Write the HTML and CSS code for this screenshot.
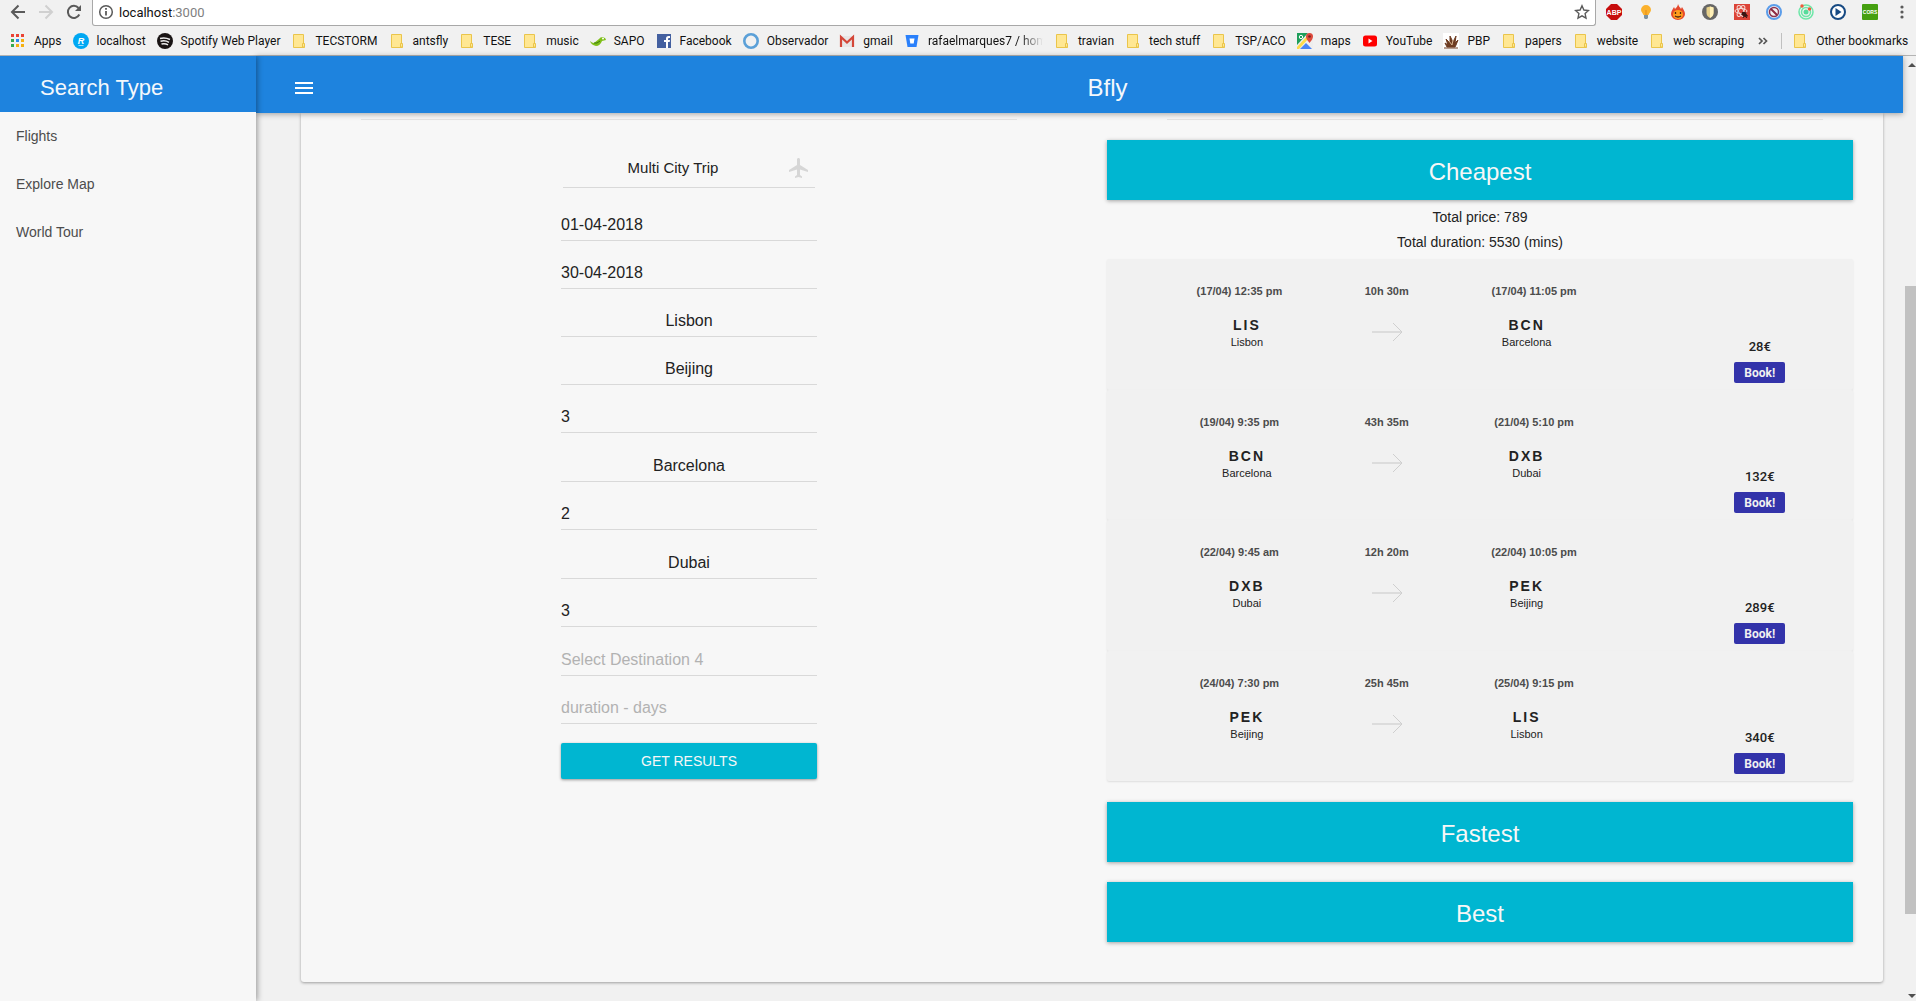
FILE: index.html
```html
<!DOCTYPE html>
<html lang="en">
<head>
<meta charset="utf-8">
<title>Bfly</title>
<link rel="stylesheet" href="styles.css">
</head>
<body>
<svg class="defs" aria-hidden="true">
  <symbol id="folder" viewBox="0 0 16 16"><path d="M2.5 1.500h10v10h1v3h-11z" fill="#ffe793" stroke="#eac54b"/><path d="M11.500 14v-3.500h2V14z" fill="#ffe793" stroke="#eac54b"/></symbol>
  <symbol id="arrow" viewBox="0 0 32 20"><path d="M1 10h30" stroke="#dcdcdc" stroke-width="2"/><path d="M22 1l9 9-9 9" fill="none" stroke="#cfcfcf"/></symbol>
</svg>

<header class="browser">
  <div class="toolbar">
    <button class="tool" aria-label="Back"><svg viewBox="0 0 16 16"><path d="M15 8H2M8.500 1.500L2 8l6.500 6.500" fill="none" stroke="#5a5a5a" stroke-width="2"/></svg></button>
    <button class="tool" aria-label="Forward"><svg viewBox="0 0 16 16"><path d="M1 8h13M7.500 1.500L14 8l-6.500 6.500" fill="none" stroke="#d0d0d0" stroke-width="2"/></svg></button>
    <button class="tool" aria-label="Reload"><svg viewBox="0 0 16 16"><path d="M13.300 10.500A6 6 0 1 1 12.500 4" fill="none" stroke="#5a5a5a" stroke-width="2"/><path d="M15 1v6H9z" fill="#5a5a5a"/></svg></button>
    <div class="omnibox">
      <svg viewBox="0 0 16 16"><circle cx="8" cy="8" r="6.300" fill="none" stroke="#5a5a5a" stroke-width="1.500"/><path d="M8 7v4.500M8 4v1.800" stroke="#5a5a5a" stroke-width="1.800"/></svg>
      <span class="url">localhost<span class="port">:3000</span></span>
      <svg viewBox="0 0 16 16"><path d="M8 1.800l1.900 4.200 4.600.500-3.400 3.100.9 4.500L8 11.800l-4 2.300.9-4.500L1.500 6.500 6.100 6z" fill="none" stroke="#5a5a5a" stroke-width="1.400"/></svg>
    </div>
    <div class="extensions">
      <svg viewBox="0 0 16 16"><path d="M5 0h6l5 5v6l-5 5H5l-5-5V5z" fill="#c70d0d"/><text x="8" y="11" text-anchor="middle" class="abp">ABP</text></svg>
      <svg viewBox="0 0 16 16"><path d="M8 1a5 5 0 0 1 5 5c0 2-2 3-2.500 5h-5C5 9 3 8 3 6a5 5 0 0 1 5-5z" fill="#fbb12d"/><path d="M8 6v5" stroke="#e58b13"/><path d="M6 11h4v3l-1 1H7l-1-1z" fill="#7d92a0"/></svg>
      <svg viewBox="0 0 16 16"><path d="M8 0c1 3 2 3 3 5l1-2c1 2 3 4 3 7a7 6 0 0 1-14 0c0-3 2-5 3-7l1 2c1-1 3-3 3-5z" fill="#e5482d"/><ellipse cx="8" cy="10.500" rx="5" ry="4.500" fill="#ff9d1e"/><path d="M5.500 8v2M10.500 8v2M5 12q3 2 6 0" fill="none" stroke="#4c2410" stroke-width="1.300"/></svg>
      <svg viewBox="0 0 16 16"><circle cx="8" cy="8" r="8" fill="#666"/><path d="M4.500 3.500L8 2.500l3.500 1V9c0 2-1.500 4-3.500 5-2-1-3.500-3-3.500-5z" fill="#e7d18b"/><path d="M8 2.500l3.500 1V9c0 2-1.500 4-3.500 5z" fill="#fff0b8"/></svg>
      <svg viewBox="0 0 16 16"><path d="M0 0h16v16H0z" fill="#dc4337"/><g fill="none" stroke="#f6d9d5"><ellipse cx="7" cy="7" rx="6" ry="2.500"/><ellipse cx="7" cy="7" rx="6" ry="2.500" transform="rotate(60 7 7)"/><ellipse cx="7" cy="7" rx="6" ry="2.500" transform="rotate(120 7 7)"/></g><ellipse cx="10.500" cy="10.500" rx="2" ry="3" transform="rotate(-40 10.500 10.500)" fill="#3a1512"/><path d="M7 10l7 2M9 14l3-6M8 8l5 6" stroke="#3a1512"/></svg>
      <svg viewBox="0 0 16 16"><circle cx="8" cy="8" r="7" fill="#f5f3f3" stroke="#5b9dea" stroke-width="2"/><circle cx="8" cy="8" r="4.500" fill="none" stroke="#8c3552" stroke-width="1.500"/><path d="M5 5l6 6" stroke="#8c2840" stroke-width="2"/></svg>
      <svg viewBox="0 0 16 16"><g fill="none" stroke="#6ee7a8" stroke-width="1.500"><circle cx="8" cy="8" r="7"/><circle cx="8" cy="8" r="4.500"/></g><circle cx="8" cy="8" r="2.500" fill="#57dc9b"/><circle cx="4" cy="2" r="1.700" fill="#f05a3c"/><circle cx="11.500" cy="5" r="1.700" fill="#f05a3c"/></svg>
      <svg viewBox="0 0 16 16"><circle cx="8" cy="8" r="7" fill="#fff" stroke="#174a83" stroke-width="2"/><path d="M5.500 4l6 4-6 4z" fill="#174a83"/></svg>
      <svg viewBox="0 0 16 16"><rect width="16" height="16" rx="1" fill="#45a010"/><text x="8" y="10" text-anchor="middle" class="cors">CORS</text></svg>
      <svg viewBox="0 0 16 16"><g fill="#5a5a5a"><circle cx="8" cy="3" r="1.600"/><circle cx="8" cy="8" r="1.600"/><circle cx="8" cy="13" r="1.600"/></g></svg>
    </div>
  </div>
  <nav class="bookmarks" aria-label="Bookmarks">
    <a href="#"><svg viewBox="0 0 16 16"><path d="M1 1h3v3H1zM6 1h3v3H6zM11 1h3v3h-3z" fill="#ea4335"/><path d="M1 6h3v3H1zM1 11h3v3H1z" fill="#34a853"/><path d="M6 6h3v3H6z" fill="#2a8cf0"/><path d="M11 6h3v3h-3zM6 11h3v3H6zM11 11h3v3h-3z" fill="#f5b010"/></svg>Apps</a>
    <a href="#"><svg viewBox="0 0 16 16"><circle cx="8" cy="8" r="8" fill="#00a8f3"/><text x="8" y="11" text-anchor="middle" class="glyph">R</text><path d="M5.500 12.500h5" stroke="#9adffc"/></svg>localhost</a>
    <a href="#"><svg viewBox="0 0 16 16"><circle cx="8" cy="8" r="8" fill="#191414"/><path d="M3 5.500q5-1.500 10 1M3.500 8.300q4.500-1.300 8.500 1M4.500 11q3.500-1 6.500.8" fill="none" stroke="#eee" stroke-width="1.500"/></svg>Spotify Web Player</a>
    <a href="#"><svg><use href="#folder"/></svg>TECSTORM</a>
    <a href="#"><svg><use href="#folder"/></svg>antsfly</a>
    <a href="#"><svg><use href="#folder"/></svg>TESE</a>
    <a href="#"><svg><use href="#folder"/></svg>music</a>
    <a href="#"><svg viewBox="0 0 16 16"><path d="M0 8q2 2 4 2l5-4q1-2 4-2 3 1 3 3l-4 1q-2 5-6 5Q1 12 0 8z" fill="#7fbf1a"/><path d="M4 10q3 1 6-2" fill="none" stroke="#3d7a0c"/><circle cx="13" cy="5.500" r="1" fill="#fff"/></svg>SAPO</a>
    <a href="#"><svg viewBox="0 0 16 16"><path d="M1 1h14v14H1z" fill="#4460a0"/><path d="M10 15V9H8V7h2V5.500Q10 3 12.500 3H14v2h-1q-1 0-1 1v1h2l-.3 2H12v6z" fill="#fff"/></svg>Facebook</a>
    <a href="#"><svg viewBox="0 0 16 16"><circle cx="8" cy="8" r="6.700" fill="none" stroke="#5ba0d8" stroke-width="2.600"/></svg>Observador</a>
    <a href="#"><svg viewBox="0 0 16 16"><path d="M1 3h14v11H1z" fill="#e8e6e6"/><path d="M2 14V4l6 5.500L14 4v10" fill="none" stroke="#d44638" stroke-width="2.200"/></svg>gmail</a>
    <a href="#" class="cut"><svg viewBox="0 0 16 16"><path d="M1.500 2h13l-2 12h-9z" fill="#2a80fb"/><path d="M5.500 5.500h5l-.8 5H6.300z" fill="#fff"/></svg><span>rafaelmarques7 / hom</span></a>
    <a href="#"><svg><use href="#folder"/></svg>travian</a>
    <a href="#"><svg><use href="#folder"/></svg>tech stuff</a>
    <a href="#"><svg><use href="#folder"/></svg>TSP/ACO</a>
    <a href="#"><svg viewBox="0 0 16 16"><path d="M0 0h16v16H0z" fill="#eee"/><path d="M0 0h11L0 12z" fill="#1e9e5a"/><path d="M0 14L11 2l2 2L2 16H0z" fill="#fddb4a"/><path d="M3 16l6-6 6 6z" fill="#4a86f5"/><circle cx="4" cy="4" r="1.700" fill="none" stroke="#fff"/><path d="M12.500 10Q9 6 9 3.500a3.500 3.500 0 0 1 7 0Q16 6 12.500 10z" fill="#dd4b3e"/><circle cx="12.500" cy="3.500" r="1.300" fill="#7b231e"/></svg>maps</a>
    <a href="#"><svg viewBox="0 0 16 16"><rect x="1" y="2.500" width="14" height="11" rx="2.500" fill="#f00"/><path d="M6.500 5.500l4 2.500-4 2.500z" fill="#fff"/></svg>YouTube</a>
    <a href="#"><svg viewBox="0 0 16 16"><path d="M0 0h16v16H0z" fill="#fff"/><path d="M1 15h14M4 14l-2-4 3 2-2-6 4 4 0-7 3 6 3-6-1 7 3-3-2 5-1 2z" fill="#6e3d23" stroke="#6e3d23"/><path d="M6 8l3 4M10 7l-1 5" stroke="#d9b692"/></svg>PBP</a>
    <a href="#"><svg><use href="#folder"/></svg>papers</a>
    <a href="#"><svg><use href="#folder"/></svg>website</a>
    <a href="#"><svg><use href="#folder"/></svg>web scraping</a>
    <button class="more" aria-label="More bookmarks"><svg viewBox="0 0 16 16"><path d="M4 5l3 3-3 3M8.500 5l3 3-3 3" fill="none" stroke="#555" stroke-width="1.700"/></svg></button>
    <a href="#" class="other"><svg><use href="#folder"/></svg>Other bookmarks</a>
  </nav>
</header>

<div class="viewport">
  <aside class="sidebar">
    <h2>Search Type</h2>
    <nav>
      <a href="#">Flights</a>
      <a href="#">Explore Map</a>
      <a href="#">World Tour</a>
    </nav>
  </aside>
  <div class="page">
    <header class="appbar">
      <button class="menu" aria-label="Menu"><svg viewBox="0 0 24 24"><path d="M3 18h18v-2H3v2zm0-5h18v-2H3v2zm0-7v2h18V6H3z" fill="#fff"/></svg></button>
      <h1>Bfly</h1>
    </header>
    <main>
      <section class="panel">
        <div class="search">
          <hr>
          <form>
            <div class="trip">
              <select aria-label="Trip type"><option>Multi City Trip</option></select>
              <svg viewBox="0 0 24 24"><path d="M21 16v-2l-8-5V3.500c0-.83-.67-1.500-1.500-1.500S10 2.670 10 3.500V9l-8 5v2l8-2.500V19l-2 1.500V22l3.500-1 3.500 1v-1.500L13 19v-5.500l8 2.500z" fill="#d6d6d6"/></svg>
            </div>
            <input type="text" aria-label="Start date" value="01-04-2018">
            <input type="text" aria-label="End date" value="30-04-2018">
            <input type="text" class="city" aria-label="From" value="Lisbon">
            <input type="text" class="city" aria-label="Destination 1" value="Beijing">
            <input type="text" aria-label="Days at destination 1" value="3">
            <input type="text" class="city stop" aria-label="Destination 2" value="Barcelona">
            <input type="text" aria-label="Days at destination 2" value="2">
            <input type="text" class="city stop" aria-label="Destination 3" value="Dubai">
            <input type="text" aria-label="Days at destination 3" value="3">
            <input type="text" class="stop" aria-label="Destination 4" placeholder="Select Destination 4">
            <input type="text" aria-label="Days at destination 4" placeholder="duration - days">
            <button class="submit" type="button">GET RESULTS</button>
          </form>
        </div>
        <div class="results">
          <hr>
          <button class="band" type="button">Cheapest</button>
          <div class="totals">
            <p>Total price: 789</p>
            <p>Total duration: 5530 (mins)</p>
          </div>
          <ul class="flights">
            <li>
              <div class="leg">
                <div class="times"><span>(17/04) 12:35 pm</span><span>10h 30m</span><span>(17/04) 11:05 pm</span></div>
                <div class="route"><div><b>LIS</b><small>Lisbon</small></div><svg><use href="#arrow"/></svg><div><b>BCN</b><small>Barcelona</small></div></div>
              </div>
              <div class="buy"><span>28€</span><button type="button">Book!</button></div>
            </li>
            <li>
              <div class="leg">
                <div class="times"><span>(19/04) 9:35 pm</span><span>43h 35m</span><span>(21/04) 5:10 pm</span></div>
                <div class="route"><div><b>BCN</b><small>Barcelona</small></div><svg><use href="#arrow"/></svg><div><b>DXB</b><small>Dubai</small></div></div>
              </div>
              <div class="buy"><span>132€</span><button type="button">Book!</button></div>
            </li>
            <li>
              <div class="leg">
                <div class="times"><span>(22/04) 9:45 am</span><span>12h 20m</span><span>(22/04) 10:05 pm</span></div>
                <div class="route"><div><b>DXB</b><small>Dubai</small></div><svg><use href="#arrow"/></svg><div><b>PEK</b><small>Beijing</small></div></div>
              </div>
              <div class="buy"><span>289€</span><button type="button">Book!</button></div>
            </li>
            <li>
              <div class="leg">
                <div class="times"><span>(24/04) 7:30 pm</span><span>25h 45m</span><span>(25/04) 9:15 pm</span></div>
                <div class="route"><div><b>PEK</b><small>Beijing</small></div><svg><use href="#arrow"/></svg><div><b>LIS</b><small>Lisbon</small></div></div>
              </div>
              <div class="buy"><span>340€</span><button type="button">Book!</button></div>
            </li>
          </ul>
          <button class="band" type="button">Fastest</button>
          <button class="band" type="button">Best</button>
        </div>
      </section>
    </main>
  </div>
  <div class="scrollbar" aria-hidden="true">
    <svg viewBox="0 0 8 4"><path d="M0 4l4-4 4 4z" fill="#505050"/></svg>
    <div class="track"><div class="thumb"></div></div>
    <svg viewBox="0 0 8 4"><path d="M0 0l4 4 4-4z" fill="#505050"/></svg>
  </div>
</div>
</body>
</html>
```
FILE: styles.css
```css
* { box-sizing: border-box; }
body {
  margin: 0;
  min-height: 100vh;
  display: flex;
  flex-direction: column;
  background: #f1f1f1;
  color: #222;
  font-family: "Liberation Sans", Arial, sans-serif;
  font-size: 14px;
}
h1, h2, p, ul { margin: 0; padding: 0; font-weight: 400; }
button, input, select { font: inherit; color: inherit; }
button { border: 0; padding: 0; background: none; cursor: pointer; }
a { color: inherit; text-decoration: none; }
svg { display: block; flex: none; }
.defs { position: absolute; width: 0; height: 0; }

/* Browser bars */
.browser {
  background: #f1f1f1;
  border-bottom: 1px solid #b3b3b3;
  font-family: Roboto, sans-serif;
  color: #111;
}
.browser svg { width: 16px; height: 16px; }
.toolbar { display: flex; height: 26px; }
.tool { width: 16px; margin: 0 2px 2px 10px; }
.omnibox {
  flex: 1;
  display: flex;
  align-items: center;
  gap: 5px;
  margin-left: 8px;
  padding: 0 5px 1px;
  background: #fff;
  border: 1px solid #a8a8a8;
  border-top: 0;
  border-radius: 0 0 3px 3px;
}
.url { flex: 1; font-size: 13px; }
.port { color: #808080; }
.extensions { display: flex; gap: 16px; padding: 4px 6px 0 10px; }
.abp { font: bold 7px "Liberation Sans", sans-serif; fill: #fff; }
.cors { font: bold 5px "Liberation Sans", sans-serif; fill: #fff; }
.glyph { font: italic bold 9px "Liberation Sans", sans-serif; fill: #fff; }
.bookmarks {
  display: flex;
  align-items: center;
  gap: 11px;
  height: 29px;
  padding: 1px 11px 0 10px;
  font-size: 12px;
  white-space: nowrap;
}
.bookmarks a { display: flex; align-items: center; gap: 8px; }
.cut span {
  width: 115px;
  overflow: hidden;
  mask-image: linear-gradient(to right, #000 80%, transparent);
}
.more { margin-left: auto; }
.bookmarks .other { border-left: 1px solid #c0c0c0; padding-left: 10px; margin-left: -1px; }

/* Application */
.viewport { flex: 1; display: flex; }
.sidebar {
  width: 256px;
  flex: none;
  z-index: 2;
  background: #f7f7f7;
  box-shadow: 1px 0 6px rgba(0, 0, 0, .4);
  clip-path: inset(0 -12px 0 0);
}
.sidebar h2 {
  height: 56px;
  padding: 0 40px;
  background: #1e83de;
  color: #f4f8fc;
  font-size: 22px;
  line-height: 64px;
}
.sidebar a { display: block; padding: 0 16px; line-height: 48px; color: #4c4c4c; }
.page { flex: 1; min-width: 0; }
.appbar {
  position: relative;
  z-index: 1;
  display: flex;
  height: 57px;
  padding: 4px 16px 0 24px;
  background: #1e83de;
  box-shadow: 0 1px 6px rgba(0, 0, 0, .35);
}
.menu { width: 48px; padding: 2px 12px 0; }
.menu svg { width: 24px; height: 24px; }
.appbar h1 {
  flex: 1;
  text-align: center;
  color: #f4f8fc;
  font-size: 24px;
  line-height: 56px;
}
main { padding: 0 20px 19px 45px; }
.panel {
  display: grid;
  grid-template-columns: 1fr 1fr;
  padding: 6px 30px 40px;
  background: #f7f7f7;
  border-radius: 0 0 3px 3px;
  box-shadow: 0 1px 3px rgba(0, 0, 0, .35);
}
hr { height: 1px; border: 0; background: #e4e4e4; }
.search { padding-right: 45px; }
.search hr { margin: 0 30px 28px; }
.results { padding-left: 15px; }
.results hr { margin: 0 30px 20px 60px; }

form { width: 256px; margin: 0 auto; display: flex; flex-direction: column; }
.trip {
  display: flex;
  align-items: center;
  height: 40px;
  margin: 0 2px 5px;
  padding-right: 4px;
  border-bottom: 1px solid #d9d9d9;
}
.trip svg { width: 24px; height: 24px; }
.trip select {
  flex: 1;
  appearance: none;
  border: 0;
  padding: 0 4px 0 0;
  background: none;
  font-size: 15px;
  text-align: center;
  text-align-last: center;
}
input {
  height: 32px;
  margin: 16px 0 0;
  padding: 0;
  border: 0;
  border-bottom: 1px solid #d9d9d9;
  background: none;
  font-size: 16px;
}
input::placeholder { color: #b2b2b2; opacity: 1; }
.city { text-align: center; }
.stop { margin-top: 17px; }
.submit {
  height: 36px;
  margin-top: 19px;
  border-radius: 2px;
  background: #00b6d1;
  color: #f7f7f7;
  box-shadow: 0 1px 3px rgba(0, 0, 0, .4);
}

.band {
  display: block;
  width: 100%;
  height: 60px;
  padding-top: 4px;
  background: #00b6d1;
  color: #f7f7f7;
  font-size: 24px;
  box-shadow: 0 1px 4px rgba(0, 0, 0, .35);
}
.band + .band { margin-top: 20px; }
.totals { padding: 5px 0 4px; text-align: center; line-height: 25px; }
.flights { list-style: none; margin-bottom: 21px; }
.flights li {
  display: grid;
  grid-template-columns: 3fr 1fr;
  min-height: 131px;
  background: #f1f1f1;
  border-radius: 2px;
  box-shadow: 0 1px 2px rgba(0, 0, 0, .1);
}
.flights li:nth-child(even) { min-height: 130px; }
.leg { padding-top: 24px; }
.times {
  display: grid;
  grid-template-columns: repeat(3, 1fr);
  width: 79%;
  margin: 0 auto 17px;
  color: #4c4c4c;
  font-size: 11px;
  font-weight: 700;
  line-height: 16px;
  text-align: center;
}
.route {
  display: grid;
  grid-template-columns: repeat(3, 1fr);
  justify-items: center;
  width: 75%;
  margin: 0 auto;
  text-align: center;
}
.route b { display: block; line-height: 18px; letter-spacing: 2px; }
.route small { display: block; font-size: 11px; line-height: 16px; }
.route svg { width: 32px; height: 20px; margin-top: 6px; }
.buy {
  display: flex;
  flex-direction: column;
  align-items: center;
  justify-content: flex-end;
  gap: 8px;
  padding-bottom: 7px;
  font-family: Roboto, sans-serif;
  font-size: 13px;
  font-weight: 500;
}
.buy button {
  height: 21px;
  padding: 0 10px;
  border-radius: 2px;
  background: #3333aa;
  color: #f1f1f1;
  font-size: 12px;
  font-weight: 700;
}

.scrollbar {
  width: 13px;
  flex: none;
  display: flex;
  flex-direction: column;
  align-items: flex-end;
  padding: 7px 0 3px;
}
.scrollbar svg { width: 8px; height: 4px; }
.track { flex: 1; width: 11px; padding: 219px 0 80px; display: flex; }
.thumb { flex: 1; background: #c1c1c1; }
```
